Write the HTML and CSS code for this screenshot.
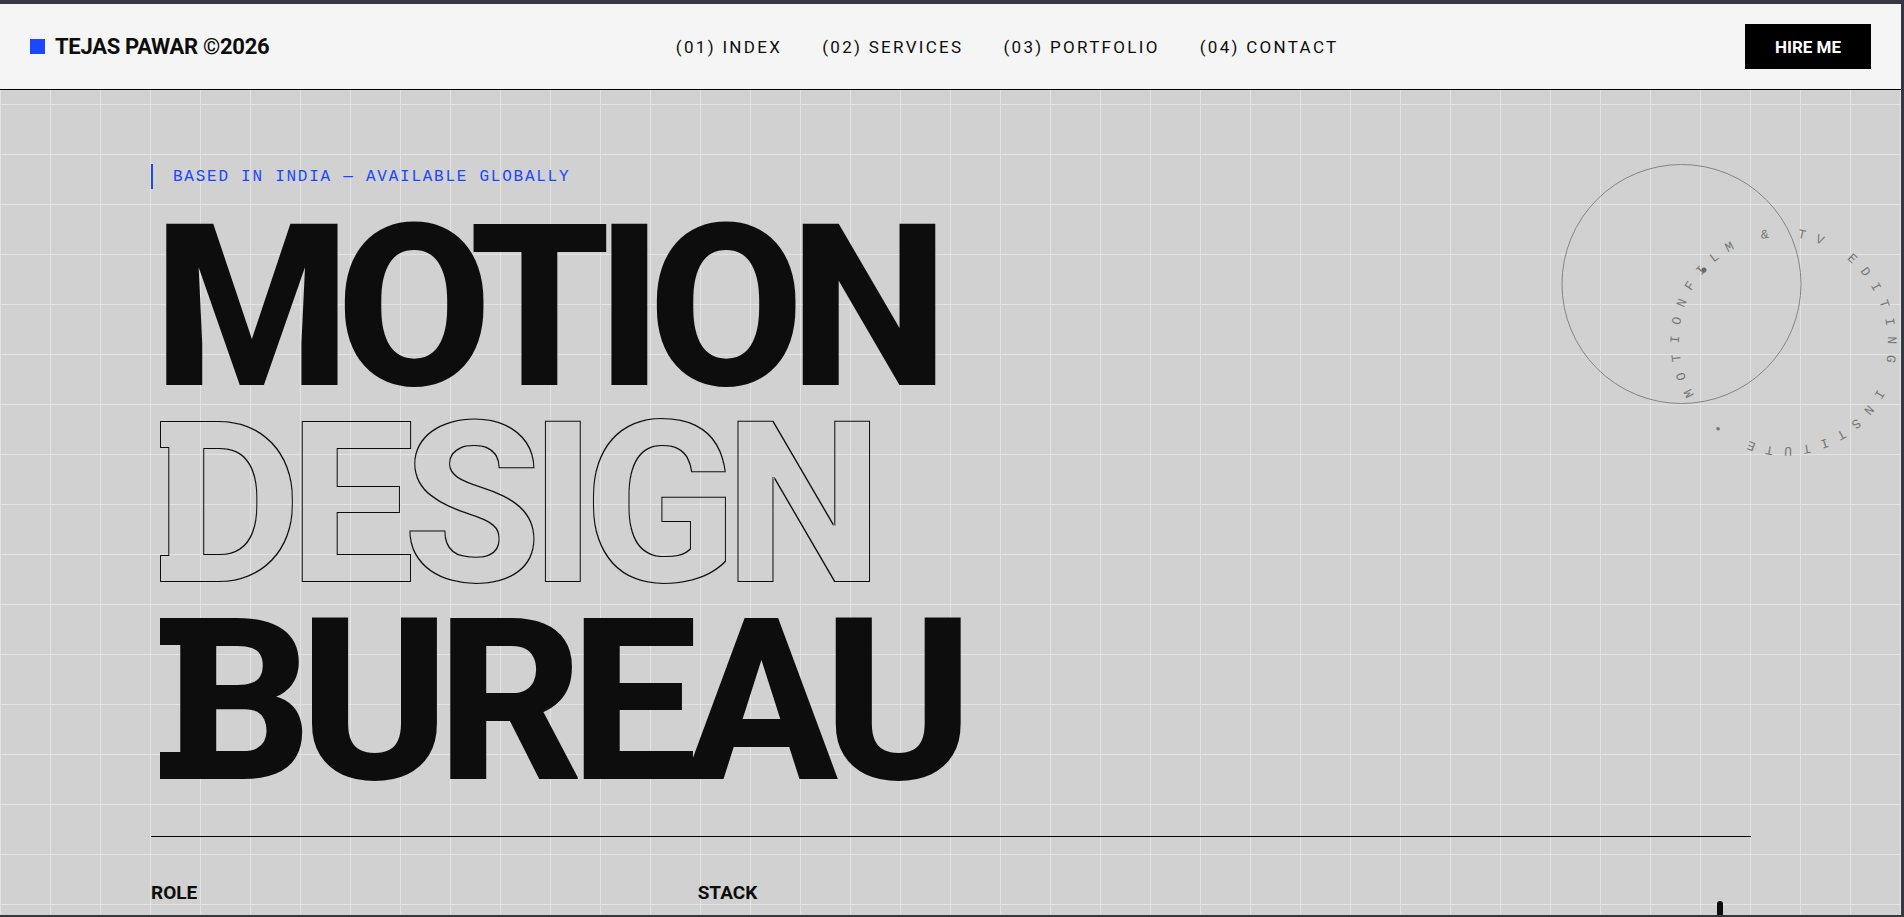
FILE: index.html
```html
<!DOCTYPE html>
<html lang="en">
<head>
    <meta charset="UTF-8">
    <meta name="viewport" content="width=device-width, initial-scale=1.0">
    <title>Tejas Pawar - Motion Design Bureau</title>
    <link rel="stylesheet" href="styles.css">
</head>
<body>
    <!-- outline for DESIGN: keeps only the edge of the letters -->
    <svg class="defs" width="0" height="0" aria-hidden="true">
        <filter id="outline">
            <feMorphology in="SourceAlpha" operator="erode" radius="1" result="inner"></feMorphology>
            <feComposite in="SourceGraphic" in2="inner" operator="out"></feComposite>
        </filter>
    </svg>

    <div class="page">
        <header class="top-bar">
            <div class="logo"><span class="logo-mark"></span>TEJAS PAWAR ©2026</div>
            <nav class="nav">
                <a href="#index">(01) INDEX</a>
                <a href="#services">(02) SERVICES</a>
                <a href="#portfolio">(03) PORTFOLIO</a>
                <a href="#contact">(04) CONTACT</a>
            </nav>
            <a class="btn" href="#contact">HIRE ME</a>
        </header>

        <main class="hero">
            <p class="eyebrow">BASED IN INDIA — AVAILABLE GLOBALLY</p>
            <h1 class="title">
                <span class="line line-motion">MOTION</span>
                <span class="line line-design">DESIGN<i class="spur spur-top"></i><i class="spur spur-bottom"></i></span>
                <span class="line line-bureau">BUREAU<i class="spur spur-top"></i><i class="spur spur-bottom"></i></span>
            </h1>
            <div class="meta">
                <div class="meta-col">ROLE</div>
                <div class="meta-col">STACK</div>
                <div class="meta-col"></div>
            </div>

            <svg class="badge" width="340" height="300" viewBox="0 0 340 300" aria-hidden="true">
                <defs>
                    <path id="badge-path" d="M 133.5 230.8 A 103.5 103.5 0 1 1 311.5 125.2 A 103.5 103.5 0 1 1 133.5 230.8"></path>
                </defs>
                <circle class="badge-ring" cx="120.5" cy="120" r="119.5"></circle>
                <circle class="badge-dot" cx="143" cy="106" r="2.5"></circle>
                <text class="badge-text"><textPath href="#badge-path">MOTIONFILM &amp; TV EDITING INSTITUTE •</textPath></text>
            </svg>

            <span class="stack-bar"></span>
        </main>
    </div>
</body>
</html>
```

FILE: styles.css
```css
html, body {
    margin: 0;
    padding: 0;
    height: 100%;
    overflow: hidden;
}

body {
    background-color: #37373f;
    padding: 4px 3px 2px 0;
    box-sizing: border-box;
    font-family: Roboto, sans-serif;
    color: #0d0d0d;
}

.defs {
    display: block;
    height: 0;
}

.page {
    height: 100%;
    display: flex;
    flex-direction: column;
    overflow: hidden;
    background-color: #d1d1d1;
    background-image:
        linear-gradient(to right, #e3e3e3 1px, transparent 1px),
        linear-gradient(to bottom, #e3e3e3 1px, transparent 1px);
    background-size: 50px 50px;
}

.top-bar {
    flex: none;
    height: 86px;
    padding: 0 30px;
    box-sizing: border-box;
    display: flex;
    justify-content: space-between;
    align-items: center;
    background-color: #f5f5f5;
    border-bottom: 1px solid #000;
}

.logo {
    display: flex;
    align-items: center;
    gap: 10px;
    font-size: 22px;
    font-weight: 700;
    letter-spacing: -0.3px;
}

.logo-mark {
    width: 15px;
    height: 15px;
    background-color: #1a47ff;
}

.nav {
    display: flex;
    gap: 40px;
}

.nav a {
    color: #0d0d0d;
    text-decoration: none;
    font-size: 17px;
    font-weight: 400;
    letter-spacing: 2.3px;
}

.btn {
    width: 126px;
    height: 45px;
    display: flex;
    justify-content: center;
    align-items: center;
    background-color: #000;
    color: #fff;
    font-size: 17px;
    font-weight: 700;
    text-decoration: none;
}

.hero {
    position: relative;
    flex: 1;
    padding: 74px 150px 0 151px;
}

.eyebrow {
    margin: 0;
    height: 25px;
    line-height: 27px;
    padding-left: 20px;
    border-left: 2px solid #1a47ff;
    color: #1a47ff;
    font-family: "Liberation Mono", monospace;
    font-size: 16px;
    letter-spacing: 1.75px;
}

.title {
    margin: 20px 0 0;
    font-size: 226px;
    font-weight: 800;
    line-height: 197px;
}

.line {
    position: relative;
    display: block;
    white-space: nowrap;
}

.line-motion {
    padding-left: 2px;
    letter-spacing: -0.065em;
}

.line-design {
    padding-left: 4px;
    letter-spacing: -0.058em;
    filter: url(#outline);
}

.line-bureau {
    padding-left: 16px;
    letter-spacing: -0.055em;
}

/* small tabs on the left of D and B */
.spur {
    position: absolute;
    left: 9px;
    width: 30px;
    height: 27px;
    background-color: #0d0d0d;
}

.spur-top {
    top: 15px;
}

.spur-bottom {
    top: 149px;
}

.meta {
    margin-top: 36px;
    padding-top: 45px;
    border-top: 1px solid #000;
    display: grid;
    grid-template-columns: repeat(3, 1fr);
    gap: 40px;
    font-size: 19px;
    font-weight: 700;
    line-height: 22px;
}

.badge {
    position: absolute;
    top: 74px;
    left: 1561px;
}

.badge-ring {
    fill: none;
    stroke: #858585;
    stroke-width: 1px;
}

.badge-dot {
    fill: #666;
}

.badge-text {
    fill: #777;
    font-family: "Liberation Mono", monospace;
    font-size: 13px;
    letter-spacing: 10.2px;
}

.stack-bar {
    position: absolute;
    left: 1717px;
    bottom: 0;
    width: 6px;
    height: 14px;
    border-radius: 3px 3px 0 0;
    background-color: #0d0d0d;
}
```
